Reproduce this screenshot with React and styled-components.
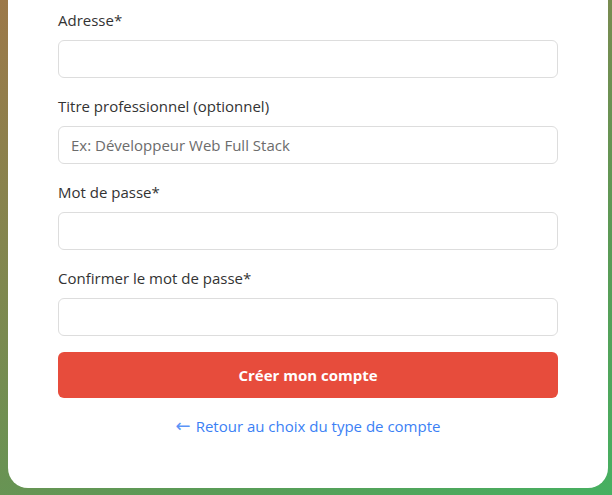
import React from "react";
import styled, { createGlobalStyle } from "styled-components";

const Global = createGlobalStyle`
  html, body { margin: 0; padding: 0; }
  body {
    width: 612px;
    height: 495px;
    overflow: hidden;
    background: linear-gradient(150deg, #9c7849 0%, #7a8a50 40%, #5b9a56 70%, #46b061 100%);
    font-family: "Open Sans", "Noto Sans", sans-serif;
  }
  * { box-sizing: border-box; }
`;

const Page = styled.div`
  padding: 0 4px 0 8px;
`;

const Card = styled.div`
  width: 600px;
  height: 488px;
  background: #ffffff;
  border-radius: 0 0 20px 20px;
  padding: 10px 50px 0 50px;
  display: flex;
  flex-direction: column;
`;

const Field = styled.div`
  display: flex;
  flex-direction: column;
  margin-bottom: 18px;
`;

const Label = styled.label`
  font-size: 15px;
  line-height: 20px;
  color: #333333;
  margin-bottom: 10px;
`;

const Input = styled.input`
  height: 38px;
  width: 100%;
  border: 1px solid #dddddd;
  border-radius: 6px;
  padding: 0 12px;
  font-family: inherit;
  font-size: 15px;
  color: #333;
  background: #fff;
  outline: none;
  &::placeholder { color: #6c6c6c; }
`;

const Submit = styled.button`
  height: 46px;
  width: 100%;
  border: none;
  border-radius: 6px;
  background: #e74c3c;
  color: #fff;
  font-family: inherit;
  font-weight: 700;
  font-size: 15px;
  margin-top: -2px;
  cursor: pointer;
`;

const Back = styled.a`
  align-self: center;
  margin-top: 17px;
  font-size: 15px;
  line-height: 22px;
  color: #3b7ff5;
  text-decoration: none;
  display: flex;
  align-items: center;
  gap: 5px;
`;

const Arrow = styled.span`
  font-family: "DejaVu Sans", sans-serif;
  font-size: 18px;
  line-height: 22px;
  color: #5b94f7;
`;

const fields = [
  { label: "Adresse*", type: "text" },
  { label: "Titre professionnel (optionnel)", type: "text", placeholder: "Ex: Développeur Web Full Stack" },
  { label: "Mot de passe*", type: "password" },
  { label: "Confirmer le mot de passe*", type: "password" },
];

export default function App() {
  return (
    <>
      <Global />
      <Page>
        <Card>
          {fields.map((f) => (
            <Field key={f.label}>
              <Label>{f.label}</Label>
              <Input type={f.type} placeholder={f.placeholder || ""} />
            </Field>
          ))}
          <Submit>Créer mon compte</Submit>
          <Back href="#">
            <Arrow>←</Arrow>
            <span>Retour au choix du type de compte</span>
          </Back>
        </Card>
      </Page>
    </>
  );
}
